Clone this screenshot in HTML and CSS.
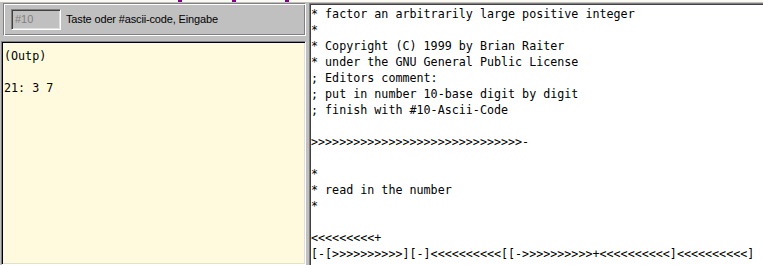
FILE: index.html
```html
<!DOCTYPE html>
<html>
<head>
<meta charset="utf-8">
<link rel="stylesheet" href="styles.css">
</head>
<body>
<div class="topstrip"><span class="mark m1"></span><span class="mark m2"></span><span class="mark m3"></span></div>
<div class="main">
  <div class="left">
    <div class="group">
      <div class="input">#10</div>
      <div class="label">Taste oder #ascii-code, Eingabe</div>
    </div>
    <div class="output"><pre class="code">(Outp)

21: 3 7</pre></div>
  </div>
  <div class="editor"><pre class="code">* factor an arbitrarily large positive integer
*
* Copyright (C) 1999 by Brian Raiter
* under the GNU General Public License
; Editors comment:
; put in number 10-base digit by digit
; finish with #10-Ascii-Code

&gt;&gt;&gt;&gt;&gt;&gt;&gt;&gt;&gt;&gt;&gt;&gt;&gt;&gt;&gt;&gt;&gt;&gt;&gt;&gt;&gt;&gt;&gt;&gt;&gt;&gt;&gt;&gt;&gt;&gt;-

*
* read in the number
*

&lt;&lt;&lt;&lt;&lt;&lt;&lt;&lt;&lt;+
[-[&gt;&gt;&gt;&gt;&gt;&gt;&gt;&gt;&gt;&gt;][-]&lt;&lt;&lt;&lt;&lt;&lt;&lt;&lt;&lt;&lt;[[-&gt;&gt;&gt;&gt;&gt;&gt;&gt;&gt;&gt;&gt;+&lt;&lt;&lt;&lt;&lt;&lt;&lt;&lt;&lt;&lt;]&lt;&lt;&lt;&lt;&lt;&lt;&lt;&lt;&lt;&lt;]</pre></div>
</div>
</body>
</html>
```
FILE: styles.css
```css
html, body {
  margin: 0;
  padding: 0;
}
body {
  width: 763px;
  height: 265px;
  overflow: hidden;
  background: #c0c0c0;
  display: flex;
  flex-direction: column;
  font-family: "Liberation Sans", Arial, sans-serif;
}
.topstrip {
  height: 3px;
  flex: none;
  display: flex;
  background: linear-gradient(#fbfbf4 0 2px, #c0c0c0 2px);
}
.mark {
  width: 4px;
  height: 2px;
  background: #800080;
}
.m1 { margin-left: 178px; }
.m2 { margin-left: 50px; }
.m3 { margin-left: 49px; }

.main {
  flex: 1;
  min-height: 0;
  display: flex;
}
.left {
  width: 306px;
  flex: none;
  display: flex;
  flex-direction: column;
}
.group {
  margin-left: 3px;
  height: 33px;
  box-sizing: border-box;
  border: 1px solid;
  border-color: #808080 #ffffff #ffffff #808080;
  box-shadow: inset 1px 1px #ffffff, inset -1px -1px #808080;
  display: flex;
  align-items: flex-start;
  padding: 5px 0 0 7px;
  gap: 5px;
  flex: none;
}
.input {
  width: 50px;
  height: 21px;
  box-sizing: border-box;
  border: 1px solid;
  border-color: #808080 #ffffff #ffffff #808080;
  box-shadow: inset 1px 1px #404040, inset -1px -1px #dfdfdf;
  background: #c0c0c0;
  color: #808080;
  font-size: 11px;
  line-height: 19px;
  padding-left: 3px;
}
.label {
  font-size: 11px;
  letter-spacing: -0.15px;
  line-height: 21px;
  color: #000;
}
.output {
  margin: 5px 0 0 1px;
  flex: 1;
  min-height: 0;
  box-sizing: border-box;
  border: 1px solid;
  border-color: #808080 #ffffff #ffffff #808080;
  box-shadow: inset 1px 1px #000000, inset -1px -1px #dfdfdf;
  background: #fffadd;
  padding: 6px 0 0 2px;
  overflow: hidden;
}
.editor {
  margin-left: 3px;
  width: 470px;
  flex: none;
  box-sizing: border-box;
  border-top: 1px solid #808080;
  border-left: 1px solid #808080;
  box-shadow: inset 1px 1px #404040;
  background: #ffffff;
  padding: 2px 0 0 1px;
  overflow: hidden;
}
.code {
  margin: 0;
  font-family: "DejaVu Sans Mono", monospace;
  font-size: 11.7px;
  line-height: 16px;
  color: #000;
  white-space: pre;
}
```
